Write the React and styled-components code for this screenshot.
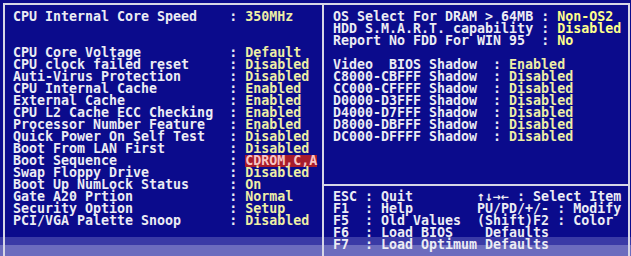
import React from 'react';
import styled, { createGlobalStyle } from 'styled-components';

const GlobalStyle = createGlobalStyle`
  body {
    margin: 0;
    background: #0b0b8c;
  }
`;

const Screen = styled.div`
  width: 631px;
  height: 256px;
  overflow: hidden;
  box-sizing: border-box;
  padding: 3px 1px 0 3px;
  background: linear-gradient(#0b0b8c 0 237px, #3a3aa6 237px 245px, #6c6cbe 245px);
  font-family: "DejaVu Sans Mono", "Liberation Mono", monospace;
  font-weight: bold;
  font-size: 13.3px;
  line-height: 12px;
  color: #ececf4;
`;

const Box = styled.div`
  display: flex;
  height: 100%;
  border: 2px solid #d6d6e6;
  border-bottom: none;
`;

const LeftPanel = styled.div`
  flex: 0 0 319px;
  box-sizing: border-box;
  padding: 6px 0 0 8px;
  border-right: 2px solid #d6d6e6;
`;

const RightPanel = styled.div`
  flex: 1;
  display: flex;
  flex-direction: column;
`;

const Settings = styled.div`
  height: 179px;
  box-sizing: border-box;
  padding: 6px 0 0 9px;
`;

const KeyHelp = styled.div`
  border-top: 2px solid #d6d6e6;
  padding: 5px 0 0 9px;
`;

const Row = styled.div`
  display: grid;
  grid-template-columns: ${p => p.$labelCh}ch 2ch auto;
  height: 12px;
  white-space: pre;
`;

const Blank = styled.div`
  height: ${p => p.$lines * 12}px;
`;

const Value = styled.span`
  justify-self: start;
  color: ${p => (p.$tone === 'bright' ? '#ffff8c' : p.$tone === 'hot' ? '#f8c4c4' : '#eeeea6')};
  background: ${p => (p.$tone === 'hot' ? '#a81c2c' : 'transparent')};
`;

const KeyRow = styled.div`
  display: grid;
  grid-template-columns: 4ch 2ch 12ch auto;
  height: 12px;
  white-space: pre;
`;

const leftTop = [['CPU Internal Core Speed', '350MHz']];

const leftMain = [
  ['CPU Core Voltage', 'Default'],
  ['CPU clock failed reset', 'Disabled'],
  ['Auti-Virus Protection', 'Disabled'],
  ['CPU Internal Cache', 'Enabled'],
  ['External Cache', 'Enabled'],
  ['CPU L2 Cache ECC Checking', 'Enabled'],
  ['Processor Number Feature', 'Enabled'],
  ['Quick Power On Self Test', 'Disabled'],
  ['Boot From LAN First', 'Disabled'],
  ['Boot Sequence', 'CDROM,C,A', 'hot'],
  ['Swap Floppy Drive', 'Disabled'],
  ['Boot Up NumLock Status', 'On'],
  ['Gate A20 Prtion', 'Normal'],
  ['Security Option', 'Setup'],
  ['PCI/VGA Palette Snoop', 'Disabled'],
];

const rightTop = [
  ['OS Select For DRAM > 64MB', 'Non-OS2'],
  ['HDD S.M.A.R.T. capability', 'Disabled'],
  ['Report No FDD For WIN 95', 'No'],
];

const shadows = [
  ['Video  BIOS Shadow', 'Enabled'],
  ['C8000-CBFFF Shadow', 'Disabled'],
  ['CC000-CFFFF Shadow', 'Disabled'],
  ['D0000-D3FFF Shadow', 'Disabled'],
  ['D4000-D7FFF Shadow', 'Disabled'],
  ['D8000-DBFFF Shadow', 'Disabled'],
  ['DC000-DFFFF Shadow', 'Disabled'],
];

const keys = [
  ['ESC', 'Quit', '↑↓→← : Select Item'],
  ['F1', 'Help', 'PU/PD/+/- : Modify'],
  ['F5', 'Old Values', '(Shift)F2 : Color'],
  ['F6', 'Load BIOS', ' Defaults'],
  ['F7', 'Load Optimum', ' Defaults'],
];

function SettingRows({ items, labelCh, tone }) {
  return items.map(([label, value, t]) => (
    <Row key={label} $labelCh={labelCh}>
      <span>{label}</span>
      <span>:</span>
      <Value $tone={t || tone}>{value}</Value>
    </Row>
  ));
}

export default function App() {
  return (
    <Screen>
      <GlobalStyle />
      <Box>
        <LeftPanel>
          <SettingRows items={leftTop} labelCh={27} />
          <Blank $lines={2} />
          <SettingRows items={leftMain} labelCh={27} />
        </LeftPanel>
        <RightPanel>
          <Settings>
            <SettingRows items={rightTop} labelCh={26} tone="bright" />
            <Blank $lines={1} />
            <SettingRows items={shadows} labelCh={20} />
          </Settings>
          <KeyHelp>
            {keys.map(([key, action, extra]) => (
              <KeyRow key={key}>
                <span>{key}</span>
                <span>:</span>
                <span>{action}</span>
                <span>{extra}</span>
              </KeyRow>
            ))}
          </KeyHelp>
        </RightPanel>
      </Box>
    </Screen>
  );
}
